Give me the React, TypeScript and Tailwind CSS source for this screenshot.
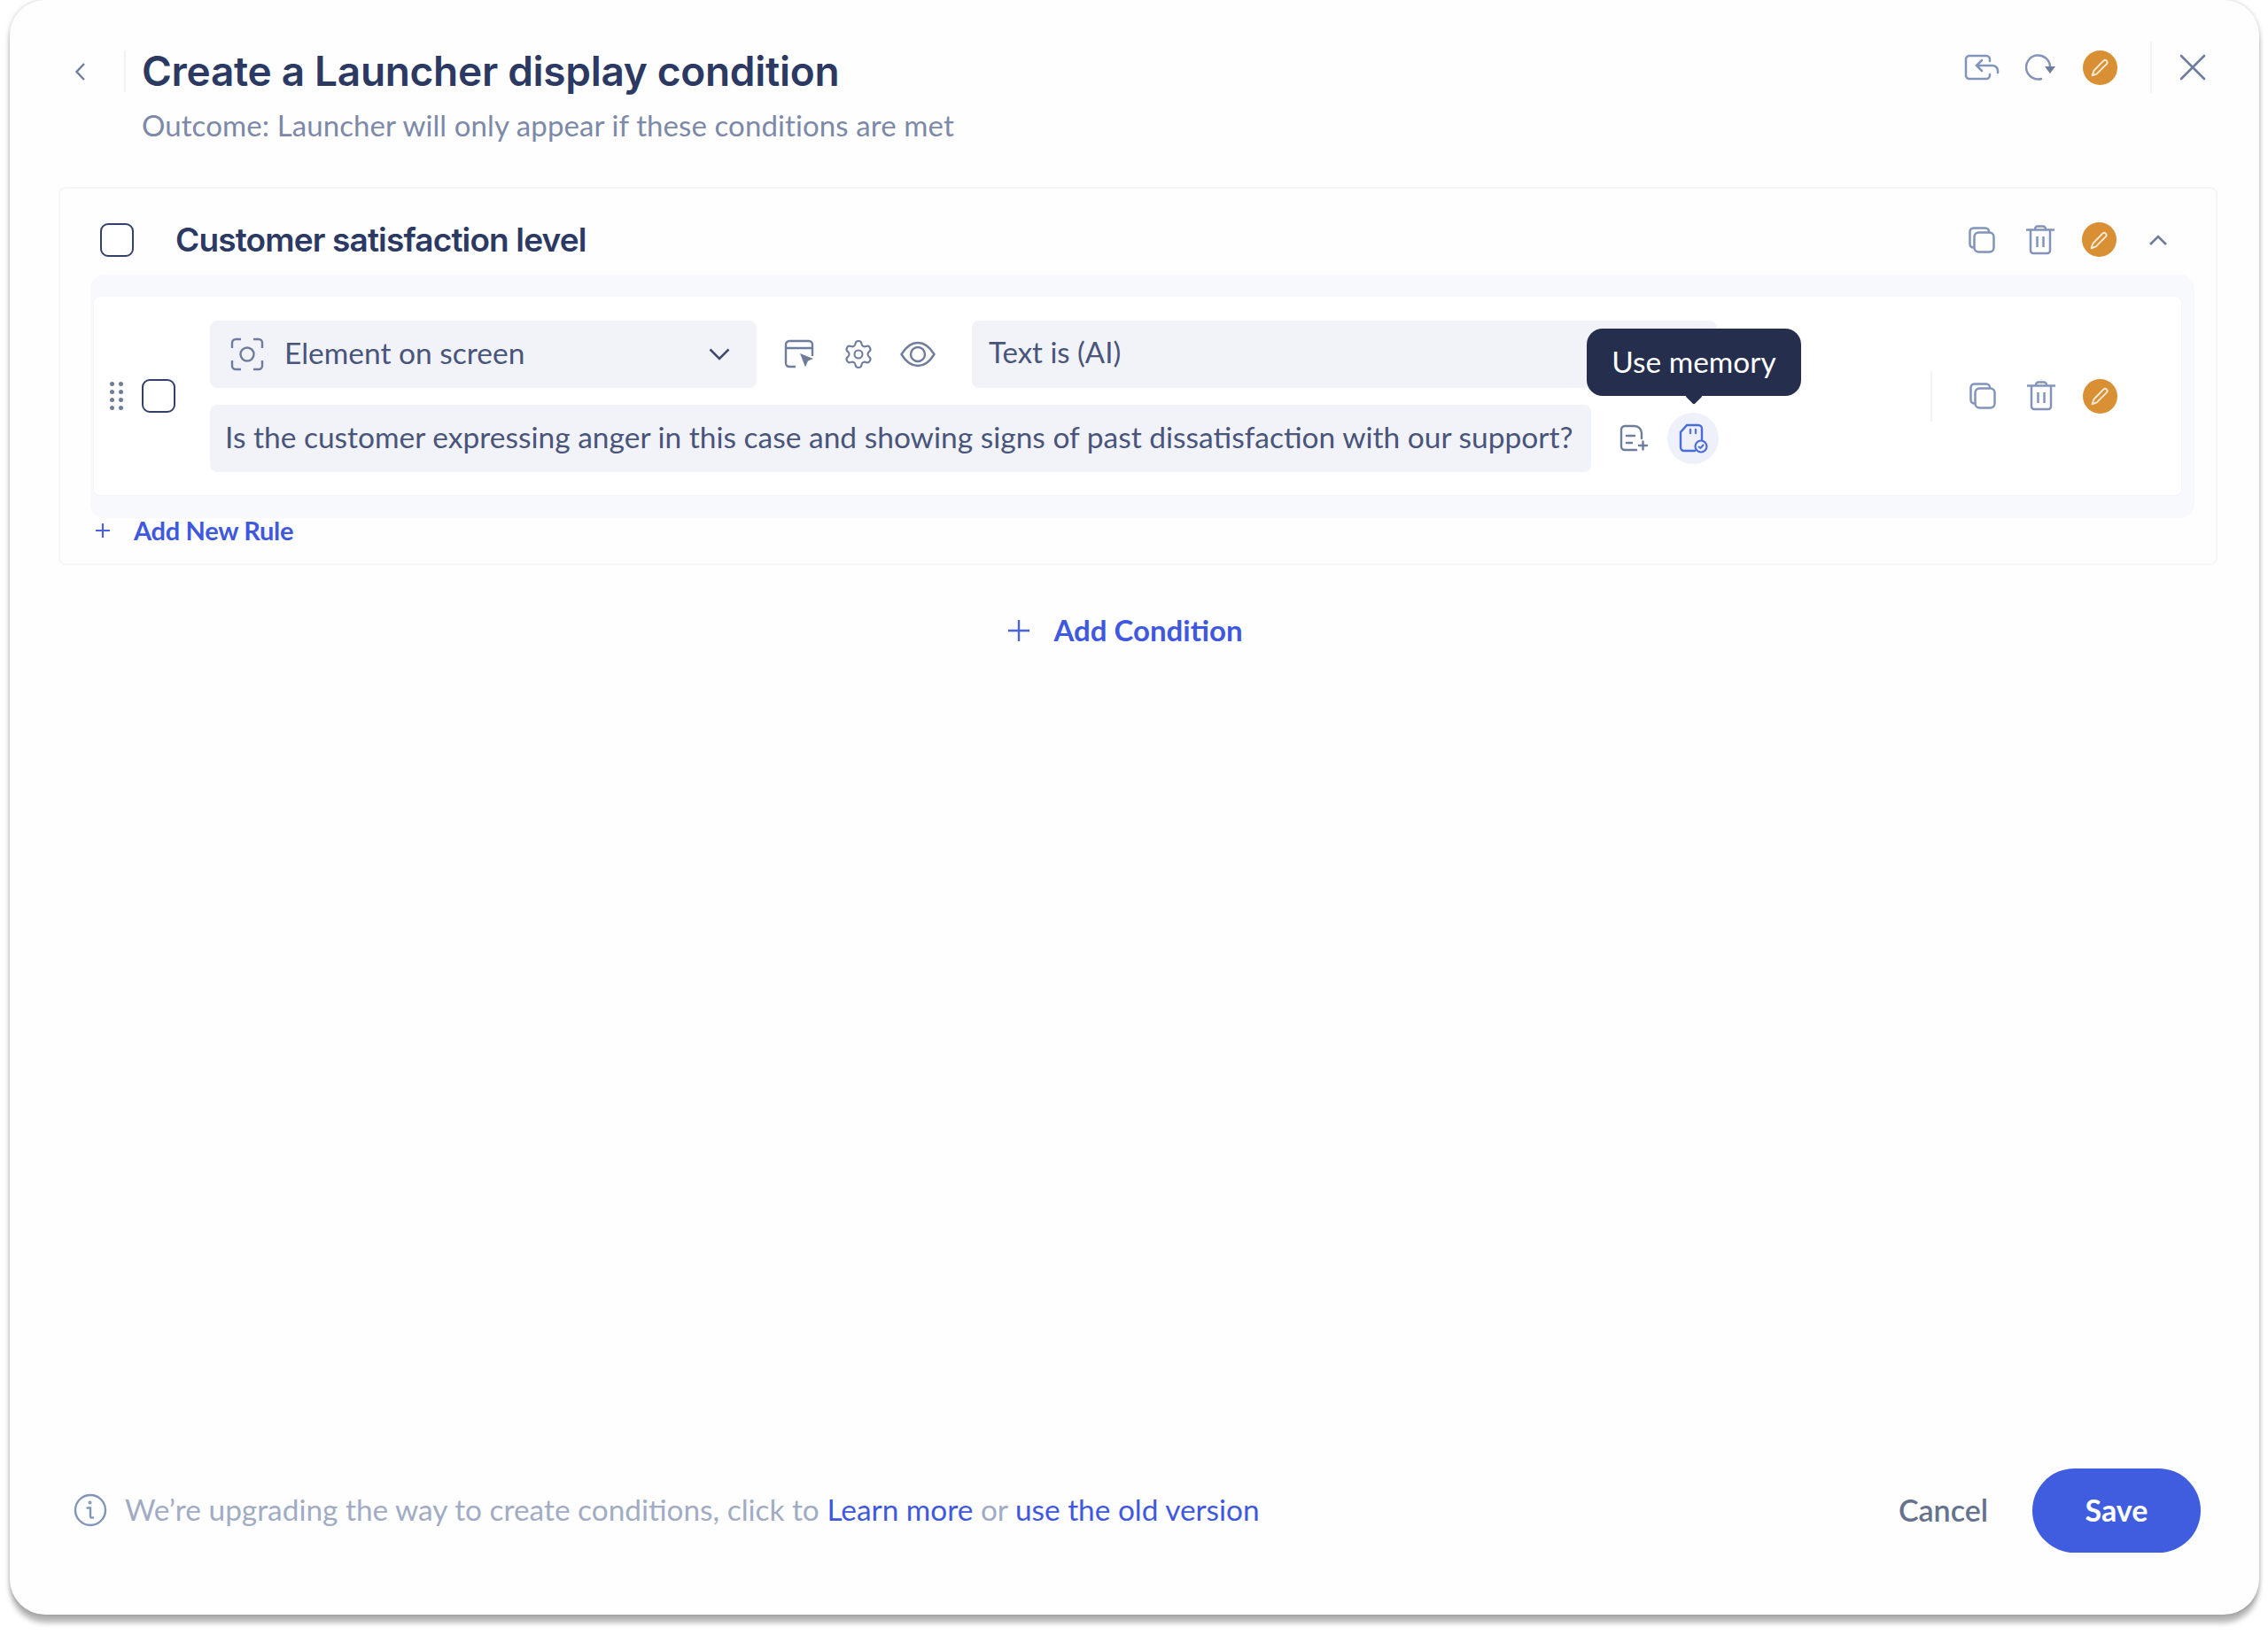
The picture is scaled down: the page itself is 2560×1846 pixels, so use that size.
import React from "react";
import { Settings } from "lucide-react";

const PRO = "font-['Lato','Liberation_Sans',sans-serif]";

function Pencil() {
  return (
    <div className="w-[39px] h-[39px] rounded-full bg-[#d98f33] flex items-center justify-center shrink-0">
      <svg width="26" height="26" viewBox="0 0 24 24" fill="none" stroke="#f9ead6" strokeWidth="1.800" strokeLinejoin="round">
        <path d="M6 15.500 16 5.200a2.300 2.300 0 0 1 3.300 3.200L9 18.800l-4.800 1.700z" />
      </svg>
    </div>
  );
}
function CopyIcon() {
  return (
    <svg width="30" height="30" viewBox="0 0 30 30" fill="none" stroke="#8294b9" strokeWidth="2.500">
      <rect x="6.500" y="6.500" width="22" height="22" rx="5" />
      <path d="M6 23.500H5.500a4 4 0 0 1-4-4V5.500a4 4 0 0 1 4-4H19a4 4 0 0 1 4 4v1" />
    </svg>
  );
}
function TrashIcon() {
  return (
    <svg width="34" height="34" viewBox="0 0 34 34" fill="none" stroke="#8294b9" strokeWidth="2.500">
      <path d="M1 5.500h32M11 5V4.500a3 3 0 0 1 3-3h6a3 3 0 0 1 3 3V5M6 6v23a3 3 0 0 0 3 3h16a3 3 0 0 0 3-3V6M13.500 13v12M20.500 13v12" />
    </svg>
  );
}
function Slot({ children, className = "" }: { children: React.ReactNode; className?: string }) {
  return <div className={"w-[66px] flex items-center justify-center shrink-0 " + className}>{children}</div>;
}
function Check() {
  return <div className="w-[38px] h-[38px] rounded-[9px] border-2 border-[#33406a] bg-white shrink-0" />;
}

export default function App() {
  return (
    <div className={"w-[2560px] h-[1846px] bg-white pl-[11px] pr-[10px] pb-[23px] " + PRO}>
      <div className="relative h-full rounded-[40px] bg-[#fefefe] flex flex-col shadow-[0_10px_6px_-1px_rgba(0,0,0,0.3),2px_0_4px_rgba(0,0,0,0.1),-2px_0_4px_rgba(0,0,0,0.1)]">
        {/* header */}
        <div className="h-[211px] shrink-0 flex justify-between pl-[69px] pr-[60px]">
          <div className="pt-[57px]">
            <div className="flex items-center h-[47px]">
              <svg width="22" height="24" viewBox="0 0 22 24" fill="none" stroke="#6f7d9c" strokeWidth="2.400" className="mr-[38px]">
                <path d="M15 3 6.500 12 15 21" />
              </svg>
              <div className="w-[2px] h-[47px] bg-[#f2f3f9]" />
              <h1 className="ml-[18px] text-[#2c3a63] text-[46px] leading-[47px] font-semibold font-['Inter',sans-serif] tracking-[-0.3px] whitespace-nowrap">
                Create a Launcher display condition
              </h1>
            </div>
            <p className="ml-[80px] mt-[17px] text-[33px] tracking-[0.1px] leading-[40px] text-[#7c89a8] whitespace-nowrap">
              Outcome: Launcher will only appear if these conditions are met
            </p>
          </div>
          <div className="flex items-center h-[58px] mt-[47px]">
            <Slot>
              <svg width="40" height="30" viewBox="0 0 40 30" fill="none" stroke="#8294b9" strokeWidth="2.500" strokeLinecap="round" className="mr-[2px]">
                <path d="M29 8V6a4 4 0 0 0-4-4H6a4 4 0 0 0-4 4v18a4 4 0 0 0 4 4h19a4 4 0 0 0 4-4v-1" />
                <path d="M38 21v-2a6 6 0 0 0-6-6H14M20 7l-6 6 6 6" />
              </svg>
            </Slot>
            <Slot>
              <svg width="36" height="30" viewBox="0 0 36 30" fill="none" stroke="#8294b9" strokeWidth="2.500" strokeLinecap="round">
                <path d="M18 28A13.500 13.500 0 1 1 28 14" />
                <path d="M22 14h12l-6 8z" fill="#6f7d9c" stroke="none" />
              </svg>
            </Slot>
            <Slot><Pencil /></Slot>
            <div className="w-[2px] h-[58px] bg-[#f2f3f9] ml-[24px] mr-[31px]" />
            <svg width="30" height="30" viewBox="0 0 30 30" fill="none" stroke="#6f7d9c" strokeWidth="2.600" strokeLinecap="round">
              <path d="M2 2l26 26M28 2 2 28" />
            </svg>
          </div>
        </div>

        {/* condition group */}
        <div className="ml-[55px] mr-[47px] h-[427px] shrink-0 rounded-[8px] border-2 border-[#f4f5fa] flex flex-col">
          <div className="h-[97px] shrink-0 flex items-center pt-[18px] pl-[45px] pr-[53px]">
            <Check />
            <h2 className="ml-[47px] text-[37px] font-semibold font-['Inter',sans-serif] tracking-[-0.85px] text-[#2c3a63] whitespace-nowrap">
              Customer satisfaction level
            </h2>
            <div className="ml-auto flex items-center">
              <Slot><CopyIcon /></Slot>
              <Slot><TrashIcon /></Slot>
              <Slot><Pencil /></Slot>
              <svg width="24" height="16" viewBox="0 0 24 16" fill="none" stroke="#6f7d9c" strokeWidth="2.600" className="ml-[22px]">
                <path d="M3 13 12 4l9 9" />
              </svg>
            </div>
          </div>

          {/* band */}
          <div className="ml-[34px] mr-[24px] h-[275px] shrink-0 rounded-[16px] bg-[#f8f9fd] pl-[3px] pr-[14px] pt-[24px]">
            <div className="h-[226px] rounded-[8px] bg-white border border-[#f4f5fa] flex items-center pl-[18px]">
              <div className="w-[15px] shrink-0 grid grid-cols-2 gap-y-[4px] gap-x-[5px] mr-[21px]">
                {[0, 1, 2, 3, 4, 5, 6, 7].map((i) => (
                  <span key={i} className="w-[5px] h-[5px] rounded-full bg-[#6f7d9c]" />
                ))}
              </div>
              <Check />
              <div className="ml-[39px] flex flex-col gap-[19px]">
                <div className="flex items-center h-[76px]">
                  <div className="w-[617px] h-[76px] rounded-[8px] bg-[#f2f3f9] flex items-center pl-[23px] pr-[30px]">
                    <svg width="38" height="38" viewBox="0 0 38 38" fill="none" stroke="#6f7d9c" strokeWidth="2.400">
                      <path d="M12 2H6a4 4 0 0 0-4 4v6M26 2h6a4 4 0 0 1 4 4v6M12 36H6a4 4 0 0 1-4-4v-6M26 36h6a4 4 0 0 0 4-4v-6" />
                      <circle cx="19" cy="19" r="7.500" />
                    </svg>
                    <span className="ml-[23px] pb-[3px] text-[33.5px] text-[#49557a] whitespace-nowrap">Element on screen</span>
                    <svg width="24" height="14" viewBox="0 0 24 14" fill="none" stroke="#3f4b70" strokeWidth="2.500" className="ml-auto">
                      <path d="M1.500 1.500 12 12 22.500 1.500" />
                    </svg>
                  </div>
                  <div className="w-[68px] ml-[14px] flex justify-center">
                    <svg width="34" height="34" viewBox="0 0 34 34" fill="none" stroke="#6f7d9c" strokeWidth="2.400">
                      <path d="M13 31H6a4 4 0 0 1-4-4V6a4 4 0 0 1 4-4h22a4 4 0 0 1 4 4v13M2 10h30" />
                      <path d="M18 16l15 6-6 2.500-3 7z" fill="#6f7d9c" stroke="none" />
                    </svg>
                  </div>
                  <div className="w-[66px] flex justify-center">
                    <Settings size={36} strokeWidth={1.4} color="#6f7d9c" />
                  </div>
                  <div className="w-[68px] flex justify-center">
                    <svg width="40" height="30" viewBox="0 0 40 30" fill="none" stroke="#6f7d9c" strokeWidth="2.400">
                      <path d="M1.500 15C7 6 13 2 20 2s13 4 18.500 13C33 24 27 28 20 28S7 24 1.500 15z" />
                      <circle cx="20" cy="15" r="8" />
                    </svg>
                  </div>
                  <div className="w-[841px] h-[76px] ml-[27px] pb-[3px] rounded-[8px] bg-[#f2f3f9] flex items-center pl-[19px] text-[33px] text-[#49557a]">
                    Text is (AI)
                  </div>
                </div>
                <div className="flex items-center h-[76px]">
                  <div className="w-[1559px] h-[76px] pb-[3px] rounded-[8px] bg-[#f2f3f9] flex items-center pl-[17px] text-[33.5px] text-[#49557a] whitespace-nowrap">
                    Is the customer expressing anger in this case and showing signs of past dissatisfaction with our support?
                  </div>
                  <div className="w-[66px] ml-[15px] flex justify-center">
                    <svg width="32" height="32" viewBox="0 0 32 32" fill="none" stroke="#6f7d9c" strokeWidth="2.400" strokeLinecap="round">
                      <path d="M19 29H6a4 4 0 0 1-4-4V6a4 4 0 0 1 4-4h11a8 8 0 0 1 8 8v6M8 13h9M8 21h6M22 24h9M26.500 19.500v9" />
                    </svg>
                  </div>
                  <div className="w-[58px] h-[58px] ml-[5px] rounded-full bg-[#eef0fa] flex items-center justify-center">
                    <svg width="34" height="34" viewBox="0 0 34 34" fill="none" strokeLinecap="round">
                      <path d="M19 31H7a4 4 0 0 1-4-4V10l7-8h13a4 4 0 0 1 4 4v12" stroke="#4a6ae0" strokeWidth="2.400" />
                      <path d="M14 7v4M20 7v4" stroke="#5f78c8" strokeWidth="2.400" />
                      <circle cx="26" cy="26" r="6.500" stroke="#4a6ae0" strokeWidth="2.200" fill="#eef0fa" />
                      <path d="M23.500 26.500l2 1.500 3-3.500" stroke="#4a6ae0" strokeWidth="2" />
                    </svg>
                  </div>
                </div>
              </div>
              <div className="ml-auto flex items-center">
                <div className="w-[2px] h-[57px] bg-[#f2f3f9] mr-[24px]" />
                <Slot><CopyIcon /></Slot>
                <Slot><TrashIcon /></Slot>
                <Slot><Pencil /></Slot>
                <div className="w-[59px]" />
              </div>
            </div>
          </div>

          <div className="flex items-center pl-[38px] h-[28px] text-[#4058e0]">
            <svg width="20" height="20" viewBox="0 0 20 20" fill="none" stroke="#4a62e2" strokeWidth="2.200">
              <path d="M10 2v16M2 10h16" />
            </svg>
            <span className="ml-[25px] pb-[1px] text-[29px] font-bold tracking-[-0.3px] whitespace-nowrap">Add New Rule</span>
          </div>
        </div>

        {/* add condition */}
        <div className="flex justify-center items-center mt-[49px] pr-[16px] text-[#4058e0]">
          <svg width="28" height="28" viewBox="0 0 28 28" fill="none" stroke="#4a62e2" strokeWidth="2.400" className="ml-[-6px]">
            <path d="M14 2v24M2 14h24" />
          </svg>
          <span className="ml-[25px] text-[33px] font-bold whitespace-nowrap">Add Condition</span>
        </div>

        {/* footer */}
        <div className="mt-auto h-[165px] flex items-start pl-[72px] pr-[66px]">
          <div className="h-[95px] flex items-center w-full">
            <svg width="38" height="38" viewBox="0 0 38 38" fill="none" stroke="#8294b9" strokeWidth="2.400" strokeLinecap="round" className="mb-[2px]">
              <circle cx="19" cy="19" r="17" />
              <path d="M15.500 16.500H19V26q0 2 3 1.500" />
              <circle cx="18.500" cy="10.500" r="0.800" />
            </svg>
            <p className="ml-[20px] pb-[3px] text-[33.4px] text-[#a1acc4] whitespace-nowrap">
              We’re upgrading the way to create conditions, click to{" "}
              <a className="text-[#4058e0]">Learn more</a> <span>or</span>{" "}
              <a className="text-[#4058e0]">use the old version</a>
            </p>
            <span className="ml-auto pb-[3px] text-[34px] font-semibold text-[#66738f]">Cancel</span>
            <button className="ml-[50px] w-[190px] h-[95px] pb-[3px] rounded-full bg-[#405de0] text-white text-[34px] font-bold">
              Save
            </button>
          </div>
        </div>

        {/* tooltip */}
        <div className="absolute left-[1780px] top-[371px] w-[242px] h-[76px] pb-[2px] rounded-[18px] bg-[#252f4d] flex items-center justify-center text-white text-[33.4px]">
          Use memory
          <div className="absolute left-[114px] top-[69px] w-[14px] h-[14px] rotate-45 rounded-[2px] bg-[#252f4d]" />
        </div>
      </div>
    </div>
  );
}
